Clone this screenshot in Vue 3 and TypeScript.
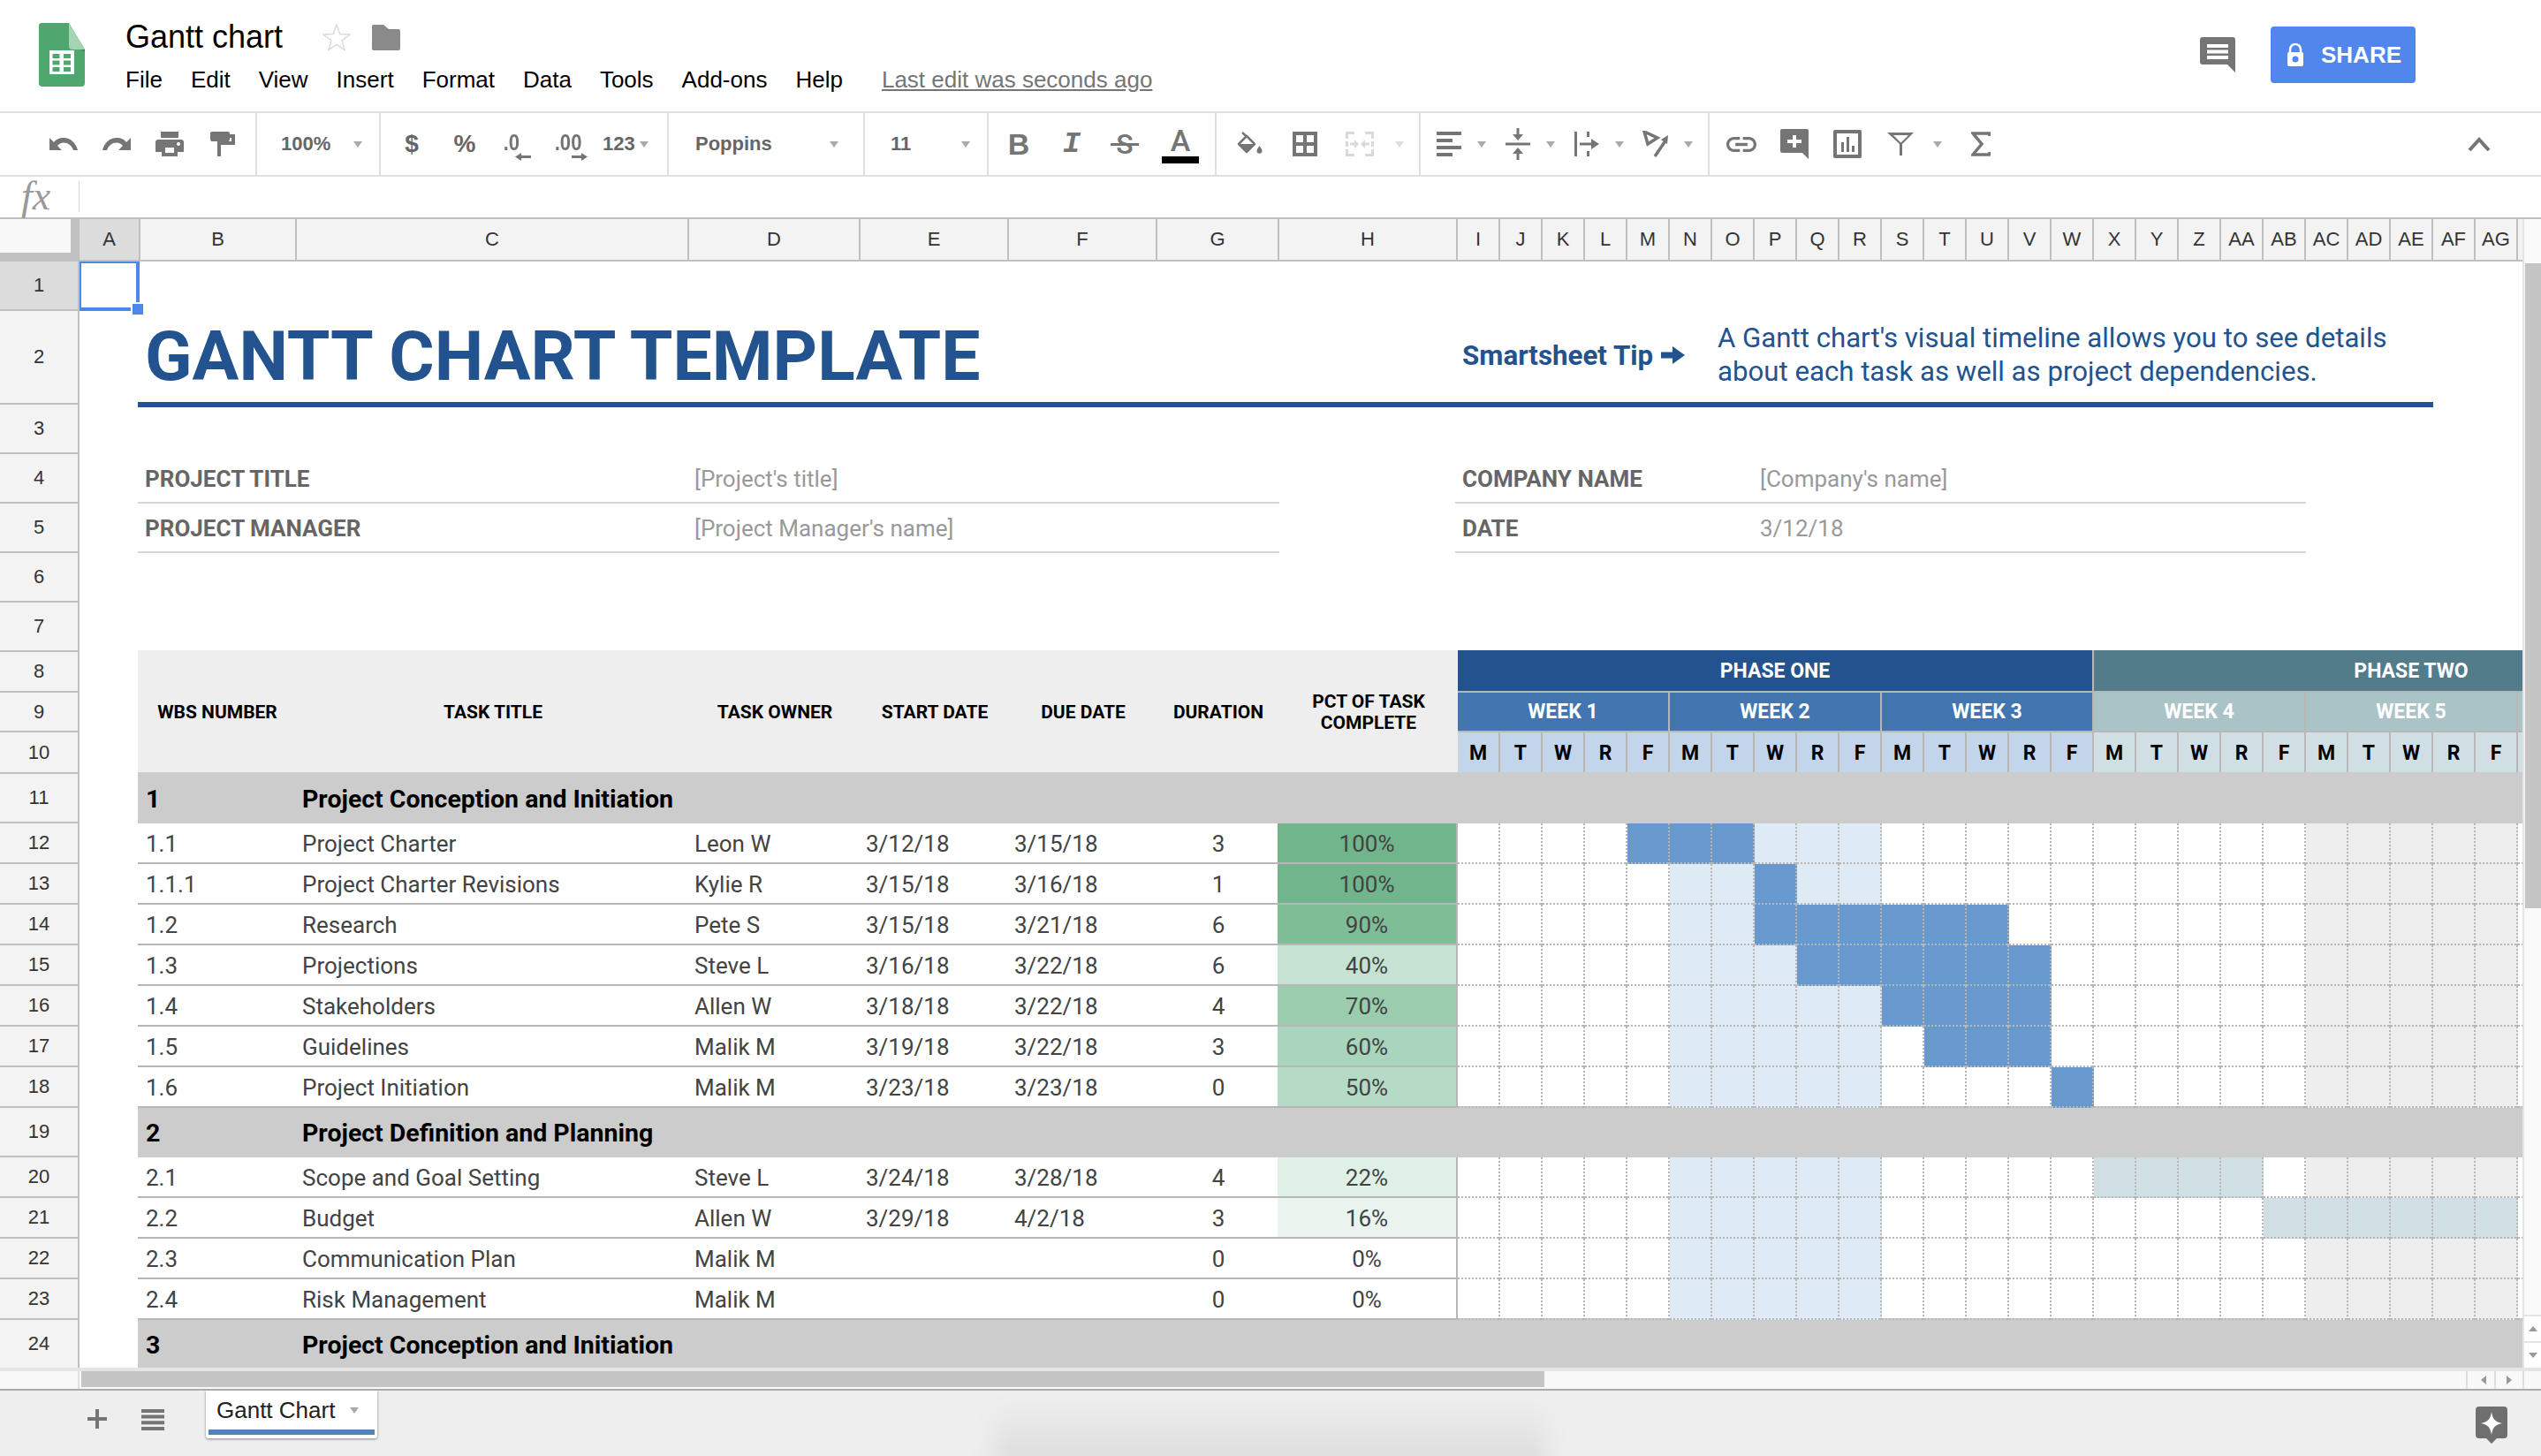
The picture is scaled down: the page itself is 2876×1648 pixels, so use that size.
<script setup lang="ts">
interface Cell { key: string; area: string; text?: string; cls: string; tint?: string }

const colWidths = [69, 177, 444, 194, 168, 168, 138, 202]
const ganttCols = 30
const visibleGantt = 26
const gridCols = [...colWidths, ...Array(ganttCols).fill(48)].map((w) => `${w}px`).join(' ')
const rowHeights = [56, 106, 56, 56, 56, 56, 56, 46, 45, 47, 56, 46, 46, 46, 46, 46, 46, 46, 56, 46, 46, 46, 46, 56]
const gridRows = rowHeights.map((h) => `${h}px`).join(' ')
const rowNums = rowHeights.map((h, i) => ({ n: i + 1, h }))

const letters = ['A','B','C','D','E','F','G','H','I','J','K','L','M','N','O','P','Q','R','S','T','U','V','W','X','Y','Z','AA','AB','AC','AD','AE','AF','AG','']

const cells: Cell[] = []
const put = (r: number, c: number, rs: number, cs: number, cls: string, text = '', tint?: string) => {
  cells.push({ key: `${r}-${c}`, area: `${r} / ${c} / span ${rs} / span ${cs}`, text, cls, tint })
}

// project info
put(4, 2, 1, 2, 'info-label rule', 'PROJECT TITLE')
put(4, 4, 1, 4, 'info-value rule', "[Project's title]")
put(5, 2, 1, 2, 'info-label rule', 'PROJECT MANAGER')
put(5, 4, 1, 4, 'info-value rule', "[Project Manager's name]")
put(4, 9, 1, 7, 'info-label rule', 'COMPANY NAME')
put(4, 16, 1, 13, 'info-value rule', "[Company's name]")
put(5, 9, 1, 7, 'info-label rule', 'DATE')
put(5, 16, 1, 13, 'info-value rule', '3/12/18')

// table head
const heads = ['WBS NUMBER', 'TASK TITLE', 'TASK OWNER', 'START DATE', 'DUE DATE', 'DURATION', 'PCT OF TASK COMPLETE']
heads.forEach((h, i) => put(8, i + 2, 3, 1, i === 0 ? 'th th-first' : 'th', h))
put(8, 9, 1, 15, 'phase p1', 'PHASE ONE')
put(8, 24, 1, 15, 'phase p2', 'PHASE TWO')
;['WEEK 1', 'WEEK 2', 'WEEK 3'].forEach((w, i) => put(9, 9 + i * 5, 1, 5, 'week w1', w))
;['WEEK 4', 'WEEK 5', ''].forEach((w, i) => put(9, 24 + i * 5, 1, 5, 'week w2', w))
for (let i = 0; i < visibleGantt; i++) {
  put(10, 9 + i, 1, 1, i < 15 ? 'day d1' : 'day d2', i < 25 ? 'MTWRF'[i % 5] : '')
}

type Task = [string, string, string, string, string, string, string, string, number, number]
const sections: { row: number; num: string; title: string }[] = [
  { row: 11, num: '1', title: 'Project Conception and Initiation' },
  { row: 19, num: '2', title: 'Project Definition and Planning' },
  { row: 24, num: '3', title: 'Project Conception and Initiation' },
]
const tasks: Record<number, Task> = {
  12: ['1.1', 'Project Charter', 'Leon W', '3/12/18', '3/15/18', '3', '100%', '#71b58c', 4, 6],
  13: ['1.1.1', 'Project Charter Revisions', 'Kylie R', '3/15/18', '3/16/18', '1', '100%', '#71b58c', 7, 7],
  14: ['1.2', 'Research', 'Pete S', '3/15/18', '3/21/18', '6', '90%', '#7fbd97', 7, 12],
  15: ['1.3', 'Projections', 'Steve L', '3/16/18', '3/22/18', '6', '40%', '#c6e2d3', 8, 13],
  16: ['1.4', 'Stakeholders', 'Allen W', '3/18/18', '3/22/18', '4', '70%', '#99cdae', 10, 13],
  17: ['1.5', 'Guidelines', 'Malik M', '3/19/18', '3/22/18', '3', '60%', '#a8d5bc', 11, 13],
  18: ['1.6', 'Project Initiation', 'Malik M', '3/23/18', '3/23/18', '0', '50%', '#b5dbc6', 14, 14],
  20: ['2.1', 'Scope and Goal Setting', 'Steve L', '3/24/18', '3/28/18', '4', '22%', '#dff0e7', 15, 18],
  21: ['2.2', 'Budget', 'Allen W', '3/29/18', '4/2/18', '3', '16%', '#eaf4ef', 19, 24],
  22: ['2.3', 'Communication Plan', 'Malik M', '', '', '0', '0%', '', -1, -1],
  23: ['2.4', 'Risk Management', 'Malik M', '', '', '0', '0%', '', -1, -1],
}
sections.forEach((s) => {
  put(s.row, 2, 1, 1, 'sec sec-num', s.num)
  put(s.row, 3, 1, 36, 'sec sec-title', s.title)
})
Object.entries(tasks).forEach(([k, t]) => {
  const r = Number(k)
  const classes = ['td left', 'td left', 'td left', 'td left', 'td left', 'td mid']
  t.slice(0, 6).forEach((v, i) => put(r, i + 2, 1, 1, i === 0 ? 'td left td-first' : classes[i], v as string))
  put(r, 8, 1, 1, 'td mid pct', t[6], t[7] || undefined)
  const from = t[8]
  const to = t[9]
  for (let i = 0; i < visibleGantt; i++) {
    let cls = 'g'
    if (i >= from && i <= to && from >= 0) cls += i < 15 ? ' bar-blue' : ' bar-teal'
    else if (i >= 5 && i <= 9) cls += ' wk2'
    else if (i >= 20 && i <= 24) cls += ' wk5'
    put(r, 9 + i, 1, 1, cls)
  }
})
</script>

<template>
  <div class="app">
    <header class="titlebar">
      <svg class="logo" viewBox="0 0 52 72" width="52" height="72">
        <path d="M3 0H34L52 30V68a4 4 0 0 1-4 4H4a4 4 0 0 1-4-4V3a3 3 0 0 1 3-3z" fill="#4fa76d" />
        <path d="M34 16L52 30V33L34 21z" fill="#3b8a58" />
        <path d="M34 0L52 30H38a4 4 0 0 1-4-4z" fill="#a5d3b4" />
        <path d="M12 31H40V58H12zM15.500 35V40H23.500V35zM28 35V40H36V35zM15.500 42.500V47.500H23.500V42.500zM28 42.500V47.500H36V42.500zM15.500 50V55H23.500V50zM28 50V55H36V50z" fill="#fff" fill-rule="evenodd" />
      </svg>
      <div class="doc">
        <div class="doc-top">
          <span class="doc-name">Gantt chart</span>
          <svg class="star" viewBox="0 0 32 32" width="32" height="32">
            <path d="M16 2l3.800 10.600 11.200.4-8.900 6.900 3.100 10.800L16 24.500 6.800 30.700l3.100-10.800L1 13l11.200-.4z" fill="none" stroke="#dcdcdc" stroke-width="1.500" />
          </svg>
          <svg class="folder" viewBox="0 0 32 29" width="32" height="29">
            <path d="M2 0H13L19 5H30a2 2 0 0 1 2 2V27a2 2 0 0 1-2 2H2a2 2 0 0 1-2-2V2a2 2 0 0 1 2-2z" fill="#8a8a8a" />
          </svg>
        </div>
        <nav class="menu">
          <span>File</span><span>Edit</span><span>View</span><span>Insert</span><span>Format</span><span>Data</span><span>Tools</span><span>Add-ons</span><span>Help</span>
          <a class="last-edit">Last edit was seconds ago</a>
        </nav>
      </div>
      <div class="top-actions">
        <svg viewBox="0 0 40 40" width="40" height="40">
          <path d="M3 0H37a3 3 0 0 1 3 3V40L31 31H3a3 3 0 0 1-3-3V3a3 3 0 0 1 3-3z" fill="#757575" />
          <path d="M8 8H32V12H8zM8 14.500H32V18.500H8zM8 21H32V25H8z" fill="#fff" />
        </svg>
        <button class="share">
          <svg viewBox="0 0 18 26" width="18" height="26">
            <path d="M3 10V7a6 6 0 0 1 12 0V10" fill="none" stroke="#fff" stroke-width="2.500" />
            <path d="M2 10H16a2 2 0 0 1 2 2V24a2 2 0 0 1-2 2H2a2 2 0 0 1-2-2V12a2 2 0 0 1 2-2zM9 14.500a3.500 3.500 0 1 0 0 7 3.500 3.500 0 0 0 0-7z" fill="#fff" fill-rule="evenodd" />
          </svg>
          <span>SHARE</span>
        </button>
      </div>
    </header>

    <div class="toolbar">
      <div class="grp g1">
        <span class="ic"><svg viewBox="0 0 32 16" width="32" height="16"><path d="M16 1C11 1 7 3 5 6L0 1V15H14L9 10c2-2 4-3.500 7-3.500 5 0 9 3 11 8.500h5C30 7 24 1 16 1z" fill="#757575" /></svg></span>
        <span class="ic"><svg viewBox="0 0 32 16" width="32" height="16"><path d="M16 1C21 1 25 3 27 6L32 1V15H18L23 10c-2-2-4-3.500-7-3.500-5 0-9 3-11 8.500H0C2 7 8 1 16 1z" fill="#757575" /></svg></span>
        <span class="ic"><svg viewBox="0 0 32 28" width="32" height="28"><path d="M6 0H26V7H6zM3 9H29a3 3 0 0 1 3 3V23H25V28H7V23H0V12a3 3 0 0 1 3-3zM11 18V24H21V18zM26 12a2 2 0 1 0 0 4 2 2 0 0 0 0-4z" fill="#757575" fill-rule="evenodd" /></svg></span>
        <span class="ic"><svg viewBox="0 0 28 28" width="28" height="28"><path d="M2 0H20a2 2 0 0 1 2 2V3H28V15H12V28H8V11H24V7H22V9a2 2 0 0 1-2 2H2a2 2 0 0 1-2-2V2a2 2 0 0 1 2-2z" fill="#757575" /></svg></span>
      </div>
      <div class="grp g2">
        <span class="tb-text">100%</span><i class="caret" />
      </div>
      <div class="grp g3">
        <span class="ic glyph">$</span>
        <span class="ic glyph thin">%</span>
        <span class="ic stack dec-less"><b>.0</b><svg viewBox="0 0 18 9" width="18" height="9"><path d="M0 4.500L7 0V3H18V6H7V9z" fill="#757575" /></svg></span>
        <span class="ic stack dec-more"><b>.00</b><svg viewBox="0 0 18 9" width="18" height="9"><path d="M18 4.500L11 0V3H0V6H11V9z" fill="#757575" /></svg></span>
        <span class="tb-text t123">123</span><i class="caret" />
      </div>
      <div class="grp g4">
        <span class="tb-text">Poppins</span><i class="caret" />
      </div>
      <div class="grp g5">
        <span class="tb-text">11</span><i class="caret" />
      </div>
      <div class="grp g6">
        <span class="ic letter bold">B</span>
        <span class="ic letter ital">I</span>
        <span class="ic letter strike"><span>S</span></span>
        <span class="ic text-color"><span>A</span><i /></span>
      </div>
      <div class="grp g7">
        <span class="ic"><svg viewBox="0 0 30 28" width="30" height="28"><path d="M2 14L11 5 20 14 11 23z" fill="none" stroke="#757575" stroke-width="2.500" stroke-linejoin="round" /><path d="M2 14H20L11 23z" fill="#757575" /><path d="M6 1L11 5.500" fill="none" stroke="#757575" stroke-width="2.500" /><path d="M25.500 16c1.800 2.600 3 4 3 5.700a3 3 0 0 1-6 0c0-1.700 1.200-3.100 3-5.700z" fill="#757575" /></svg></span>
        <span class="ic"><svg viewBox="0 0 28 28" width="28" height="28"><path d="M2 2H26V26H2zM14 2V26M2 14H26" fill="none" stroke="#757575" stroke-width="4" /></svg></span>
        <span class="ic"><svg viewBox="0 0 32 28" width="32" height="28"><path d="M1.500 8V1.500H10M22 1.500H30.500V8M30.500 20V26.500H22M10 26.500H1.500V20M1.500 11V17M30.500 11V17" fill="none" stroke="#d9d9d9" stroke-width="3" /><path d="M5 12.500H10V9L15 14 10 19V15.500H5zM27 12.500H22V9L17 14 22 19V15.500H27z" fill="#d9d9d9" /></svg></span>
        <i class="caret light" />
      </div>
      <div class="grp g8">
        <span class="ic2"><svg viewBox="0 0 28 28" width="28" height="28"><path d="M0 0H28V4H0zM0 8H18V12H0zM0 16H28V20H0zM0 24H18V28H0z" fill="#757575" /></svg></span><i class="caret" />
        <span class="ic2"><svg viewBox="0 0 28 36" width="28" height="36"><path d="M0 16.500H28V19.500H0z" fill="#757575" /><path d="M12.500 0H15.500V7H20L14 14 8 7H12.500zM12.500 36H15.500V29H20L14 22 8 29H12.500z" fill="#757575" /></svg></span><i class="caret" />
        <span class="ic2"><svg viewBox="0 0 28 28" width="28" height="28"><path d="M0 0H3V28H0zM14 0H17V6H14zM14 22H17V28H14zM6 12.500H19V8L28 14 19 20V15.500H6z" fill="#757575" /></svg></span><i class="caret" />
        <span class="ic2"><svg viewBox="0 0 30 30" width="30" height="30"><path d="M2 1L17 8 6 15zM14 29L27 10" fill="none" stroke="#757575" stroke-width="3.500" /><path d="M29 5L28 15 21 10z" fill="#757575" /></svg></span><i class="caret" />
      </div>
      <div class="grp g9">
        <span class="ic"><svg viewBox="2 7 20 10" width="34" height="17"><path d="M3.900 12c0-1.710 1.390-3.100 3.100-3.100h4V7H7c-2.760 0-5 2.240-5 5s2.240 5 5 5h4v-1.900H7c-1.710 0-3.100-1.390-3.100-3.100zM8 13h8v-2H8v2zm9-6h-4v1.900h4c1.710 0 3.100 1.390 3.100 3.100s-1.390 3.100-3.100 3.100h-4V17h4c2.760 0 5-2.240 5-5s-2.240-5-5-5z" fill="#757575" /></svg></span>
        <span class="ic"><svg viewBox="0 0 32 34" width="32" height="34"><path d="M2 0H30a2 2 0 0 1 2 2V34L25 27H2a2 2 0 0 1-2-2V2a2 2 0 0 1 2-2z" fill="#757575" /><path d="M14 7H18V12H24V16H18V21H14V16H8V12H14z" fill="#fff" /></svg></span>
        <span class="ic"><svg viewBox="0 0 32 32" width="32" height="32"><path d="M2 0H30a2 2 0 0 1 2 2V30a2 2 0 0 1-2 2H2a2 2 0 0 1-2-2V2a2 2 0 0 1 2-2zM4 4V28H28V4z" fill="#757575" fill-rule="evenodd" /><path d="M9 14H12V25H9zM15 8H18V25H15zM21 18H24V25H21z" fill="#757575" /></svg></span>
        <span class="ic"><svg viewBox="0 0 30 26" width="30" height="26"><path d="M0 0H30L17 13V26H14V13zM7 3L15.500 11.500 24 3z" fill="#757575" fill-rule="evenodd" /></svg></span>
        <i class="caret cbox" />
        <span class="ic sigma"><svg viewBox="0 0 22 28" width="22" height="28"><path d="M21 5V2H2L12 14 2 26H21V23" fill="none" stroke="#757575" stroke-width="3.500" /></svg></span>
      </div>
      <svg class="collapse" viewBox="0 0 26 16" width="26" height="16"><path d="M2 15L13 3 24 15" fill="none" stroke="#757575" stroke-width="4" /></svg>
    </div>

    <div class="formula">
      <span class="fx">fx</span>
      <span class="fx-sep" />
    </div>

    <div class="sheet">
      <div class="sheet-main">
        <div class="head-row">
          <div class="corner"><span /></div>
          <div class="col-heads">
            <div v-for="(l, i) in letters" :key="i" class="ch" :class="{ active: i === 0 }" :style="{ width: (i < 8 ? colWidths[i] : 48) + 'px' }">{{ l }}</div>
          </div>
        </div>
        <div class="body">
          <div class="row-heads">
            <div v-for="r in rowNums" :key="r.n" class="rh" :class="{ active: r.n === 1 }" :style="{ height: r.h + 'px' }">{{ r.n }}</div>
          </div>
          <div class="grid" :style="{ gridTemplateColumns: gridCols, gridTemplateRows: gridRows }">
            <div class="sel"><i /></div>
            <div class="title-row">
              <h1>GANTT CHART TEMPLATE</h1>
            </div>
            <div class="tip">
              <span class="tip-head">Smartsheet Tip <svg viewBox="0 0 28 24" width="28" height="24"><path d="M0 8.500H13V2L27 12 13 22V15.500H0z" fill="#22538f" /></svg></span>
              <span class="tip-body">A Gantt chart's visual timeline allows you to see details<br />about each task as well as project dependencies.</span>
            </div>
            <div class="title-rule" />
            <div
              v-for="c in cells"
              :key="c.key"
              :class="c.cls"
              :style="{ gridArea: c.area, backgroundColor: c.tint }"
            ><span v-if="c.text">{{ c.text }}</span></div>
          </div>
        </div>
      </div>
      <aside class="vscroll">
        <div class="vthumb" />
        <div class="varrows">
          <button class="arrow"><i class="tri up" /></button>
          <button class="arrow"><i class="tri down" /></button>
        </div>
      </aside>
    </div>

    <div class="hscroll">
      <div class="hspacer" />
      <div class="htrack"><div class="hthumb" /></div>
      <button class="harrow"><i class="tri left" /></button>
      <button class="harrow"><i class="tri right" /></button>
      <div class="hend" />
    </div>

    <footer class="tabs">
      <svg class="plus" viewBox="0 0 22 22" width="22" height="22"><path d="M9 0H13V9H22V13H13V22H9V13H0V9H9z" fill="#757575" /></svg>
      <svg class="all" viewBox="0 0 26 24" width="26" height="24"><path d="M0 0H26V4H0zM0 6.600H26V10.600H0zM0 13.300H26V17.300H0zM0 20H26V24H0z" fill="#757575" /></svg>
      <div class="tab">
        <div class="tab-in"><span>Gantt Chart</span><i class="caret" /></div>
        <div class="tab-line" />
      </div>
      <div class="explore">
        <svg viewBox="0 0 36 42" width="36" height="42">
          <path d="M4 0H32a4 4 0 0 1 4 4V32a4 4 0 0 1-4 4H24L18 42 12 36H4a4 4 0 0 1-4-4V4a4 4 0 0 1 4-4z" fill="#6f6f6f" />
          <path d="M18 6C19.500 14 21 17 30 19 21 21 19.500 24 18 32 16.500 24 15 21 6 19 15 17 16.500 14 18 6z" fill="#fff" />
        </svg>
      </div>
      <div class="shadow" />
    </footer>
  </div>
</template>

<style>
html, body { margin: 0; padding: 0; background: #fff; }
</style>

<style scoped>
.app { width: 2876px; height: 1648px; display: flex; flex-direction: column; overflow: hidden; background: #fff; font-family: "Liberation Sans", Arial, sans-serif; color: #000; }

.titlebar { height: 126px; flex: none; box-sizing: border-box; display: flex; align-items: flex-start; position: relative; }
.logo { margin: 26px 0 0 44px; flex: none; }
.doc { margin-left: 46px; }
.doc-top { display: flex; align-items: center; height: 36px; margin-top: 24px; }
.doc-name { font-size: 36px; width: 223px; }
.folder { margin-left: 24px; }
.menu { display: flex; align-items: center; gap: 32px; font-size: 26px; margin-top: 15px; height: 30px; }
.last-edit { margin-left: 12px; color: #757575; text-decoration: underline; }
.top-actions { margin-left: auto; display: flex; align-items: flex-start; padding-right: 142px; padding-top: 30px; gap: 40px; }
.top-actions > svg { margin-top: 12px; }
.share { width: 164px; height: 64px; border: 0; border-radius: 4px; background: #5186ec; color: #fff; font: bold 26px "Liberation Sans", Arial, sans-serif; display: flex; align-items: center; padding: 0 0 0 19px; gap: 20px; }

.toolbar { height: 74px; flex: none; box-sizing: border-box; border-top: 2px solid #e0e0e0; border-bottom: 2px solid #e0e0e0; display: flex; align-items: stretch; position: relative; color: #666; }
.grp { display: flex; align-items: center; box-sizing: border-box; border-right: 2px solid #e0e0e0; flex: none; }
.g1 { width: 291px; padding-left: 42px; }
.g2 { width: 140px; padding-left: 27px; gap: 26px; }
.g3 { width: 326px; padding-left: 5px; }
.g4 { width: 222px; padding: 0 28px 0 30px; justify-content: space-between; }
.g5 { width: 140px; padding: 0 19px 0 29px; justify-content: space-between; }
.g6 { width: 258px; padding-left: 4px; }
.g7 { width: 231px; padding-left: 7px; }
.g7 .ic { width: 62px; }
.g7 .caret { margin-left: 9px; }
.g8 { width: 327px; padding-left: 5px; }
.g9 { border-right: 0; padding-left: 6px; }
.ic { width: 60px; height: 100%; display: flex; align-items: center; justify-content: center; flex: none; }
.ic2 { width: 53px; display: flex; align-items: center; justify-content: center; flex: none; }
.g8 .caret { margin: 0 9.500px 0 5.500px; }
.cbox { margin: 0 7px 0 7px; }
.sigma { margin-left: 7px; }
.caret { width: 0; height: 0; flex: none; border-left: 5px solid transparent; border-right: 5px solid transparent; border-top: 7px solid #aaa; }
.caret.light { border-top-color: #ddd; }
.tb-text { font-size: 22px; font-weight: bold; color: #666; }
.t123 { margin: 0 5px 0 9px; }
.glyph { font-size: 28px; font-weight: bold; color: #666; font-family: "Liberation Sans", sans-serif; }
.stack { flex-direction: column; font-size: 26px; line-height: 26px; justify-content: center; color: #757575; padding-top: 4px; box-sizing: border-box; }
.stack b { font-weight: bold; transform: scaleX(.85); }
.stack svg { margin-left: 26px; margin-top: -1px; }
.dec-less { margin-left: -7px; }
.dec-more { margin-left: 4px; }
.letter { font-size: 34px; color: #757575; }
.letter.bold { font-family: "Liberation Sans", sans-serif; font-weight: bold; }
.letter.ital { font-family: "Liberation Mono", monospace; font-style: italic; font-weight: bold; }
.letter.strike { font-family: Roboto, sans-serif; font-weight: 500; font-size: 32px; }
.letter.strike span { position: relative; }
.letter.strike span::after { content: ""; position: absolute; left: -6px; right: -6px; top: 50%; height: 3px; margin-top: -1px; background: #757575; }
.text-color { flex-direction: column; margin-left: 3px; }
.text-color span { font: 500 34px/30px Roboto, sans-serif; color: #757575; margin-top: 2px; }
.text-color i { display: block; width: 42px; height: 8px; background: #000; margin-top: 3px; }
.collapse { position: absolute; left: 2793px; top: 27px; }

.formula { height: 46px; flex: none; display: flex; align-items: center; position: relative; }
.fx { width: 89px; box-sizing: border-box; padding-left: 24px; margin-top: -3px; font: italic 46px "Liberation Serif", serif; color: #9a9a9a; line-height: 40px; }
.fx-sep { width: 1px; height: 34px; background: #d5d5d5; }

.sheet { height: 1302px; flex: none; display: flex; border-top: 2px solid #c0c0c0; box-sizing: border-box; overflow: hidden; }
.sheet-main { width: 2855px; flex: none; display: flex; flex-direction: column; overflow: hidden; }
.head-row { display: flex; height: 48px; flex: none; border-bottom: 2px solid #c0c0c0; box-sizing: border-box; }
.corner { width: 90px; flex: none; box-sizing: border-box; background: #c0c0c0; padding: 0 10px 8px 0; }
.corner span { display: block; height: 100%; background: #f8f8f8; }
.col-heads { display: flex; background: #f3f3f3; }
.ch { flex: none; box-sizing: border-box; border-right: 2px solid #c0c0c0; text-align: center; font-size: 22px; line-height: 46px; color: #333; }
.ch.active { background: #dcdcdc; }

.body { display: flex; flex: none; }
.row-heads { width: 90px; flex: none; box-sizing: border-box; background: #f3f3f3; border-right: 2px solid #c0c0c0; }
.rh { box-sizing: border-box; border-bottom: 2px solid #c0c0c0; display: flex; align-items: center; justify-content: center; font-size: 22px; color: #333; }
.rh.active { background: #dcdcdc; }

.grid { display: grid; position: relative; flex: none; }
.sel { grid-area: 1 / 1 / span 1 / span 1; margin-right: 1px; border: solid #4f86ec; border-width: 2px 4px 4px 2px; box-sizing: border-box; position: relative; z-index: 2; }
.sel i { position: absolute; right: -8px; bottom: -8px; width: 12px; height: 12px; background: #4f86ec; box-shadow: 0 0 0 2px #fff; }
.title-row { grid-area: 2 / 2 / span 1 / span 7; display: flex; align-items: flex-end; padding-left: 5px; box-sizing: border-box; }
.title-row h1 { margin: 0 0 11px; font: bold 78.600px/88px Roboto, sans-serif; color: #22538f; white-space: nowrap; }
.tip { grid-area: 2 / 9 / span 1 / span 23; display: flex; align-items: center; padding: 0 0 6px 5px; }
.tip-head { font: bold 31.300px Roboto, sans-serif; color: #22538f; width: 289px; flex: none; display: flex; align-items: center; gap: 9px; white-space: nowrap; }
.tip-body { font: 31.200px/38px Roboto, sans-serif; color: #22538f; white-space: nowrap; }
.title-rule { grid-area: 2 / 2 / span 1 / span 30; align-self: end; height: 6px; margin: 0 0 -3px -3px; background: #22538f; }

.rule { border-bottom: 2px solid #d6d6d6; box-sizing: border-box; display: flex; align-items: center; white-space: nowrap; padding-top: 1px; }
.info-label { font: bold 26px Roboto, sans-serif; color: #666; margin-left: -3px; padding-left: 8px; }
.info-value { font: 26px Roboto, sans-serif; color: #999; padding-left: 6px; }

.th { background: #eee; display: flex; align-items: center; justify-content: center; text-align: center; font: bold 21px/24px Roboto, sans-serif; padding: 0 18px; box-sizing: border-box; margin-top: -2px; }
.th-first { margin-left: -3px; }
.phase, .week, .day { display: flex; align-items: center; justify-content: center; box-sizing: border-box; font-family: Roboto, sans-serif; font-weight: bold; white-space: nowrap; }
.phase { font-size: 23px; color: #fff; border-bottom: 2px solid #b7b7b7; border-right: 2px solid #b7b7b7; margin-top: -2px; }
.p1 { background: #22538f; }
.p2 { background: #527c8a; }
.week { font-size: 23px; color: #fff; border-bottom: 2px solid #b7b7b7; border-right: 2px solid #b7b7b7; }
.w1 { background: #4375b0; }
.w2 { background: #a9c3c7; }
.day { font-size: 23px; color: #000; border-right: 2px solid #b7b7b7; }
.d1 { background: #c2d5ea; }
.d2 { background: #d0dfe3; }

.sec { background: #ccc; display: flex; align-items: center; font: bold 28.500px Roboto, sans-serif; color: #000; box-sizing: border-box; margin-top: -2px; padding-top: 2px; white-space: nowrap; }
.sec-num { margin-left: -3px; padding-left: 9px; }
.sec-title { padding-left: 6px; }

.td { box-sizing: border-box; border-bottom: 2px solid #b7b7b7; display: flex; align-items: center; font: 26px Roboto, sans-serif; color: #434343; white-space: nowrap; padding-top: 2px; }
.td-first { margin-left: -3px; padding-left: 9px; }
.left { padding-left: 6px; }
.td-first.left { padding-left: 9px; }
.mid { justify-content: center; }
.pct { border-right: 2px solid #b7b7b7; margin-left: -2px; }
.g {
  box-sizing: border-box;
  background-image: repeating-linear-gradient(to right, #b7b7b7 0 2px, transparent 2px 4px), repeating-linear-gradient(to bottom, #b7b7b7 0 2px, transparent 2px 4px);
  background-size: 100% 2px, 2px 100%;
  background-position: left bottom, right top;
  background-repeat: no-repeat;
}
.bar-blue { background-color: #6798ce; }
.bar-teal { background-color: #d0dfe3; }
.wk2 { background-color: #deeaf6; }
.wk5 { background-color: #ededed; }

.vscroll { width: 21px; flex: none; position: relative; border-left: 2px solid #e4e4e4; box-sizing: border-box; display: flex; flex-direction: column; background: #fafafa; }
.vthumb { margin-top: 50px; height: 730px; background: #c4c4c4; margin-left: 1px; }
.varrows { margin-top: auto; }
.arrow { display: flex; align-items: center; justify-content: center; width: 100%; height: 30px; padding: 0; border: 0; border-top: 2px solid #e4e4e4; background: #fff; }
.tri { width: 0; height: 0; display: block; }
.tri.up { border-left: 5px solid transparent; border-right: 5px solid transparent; border-bottom: 6px solid #999; }
.tri.down { border-left: 5px solid transparent; border-right: 5px solid transparent; border-top: 6px solid #999; }
.tri.left { border-top: 5px solid transparent; border-bottom: 5px solid transparent; border-right: 6px solid #999; }
.tri.right { border-top: 5px solid transparent; border-bottom: 5px solid transparent; border-left: 6px solid #999; }

.hscroll { height: 26px; flex: none; display: flex; background: #f8f8f8; border-top: 4px solid #e4e4e4; border-bottom: 2px solid #aaa; box-sizing: border-box; }
.hspacer { width: 90px; border-right: 2px solid #e0e0e0; box-sizing: border-box; flex: none; }
.htrack { width: 2701px; flex: none; padding: 0 0 0 2px; box-sizing: border-box; }
.hthumb { width: 1656px; height: 18px; background: #c4c4c4; }
.harrow { width: 32px; flex: none; display: flex; align-items: center; justify-content: center; padding: 0; background: #f8f8f8; border: 0; border-left: 2px solid #e0e0e0; }
.hend { width: 21px; border-left: 2px solid #e0e0e0; box-sizing: border-box; }

.tabs { flex: 1; background: #eee; position: relative; display: flex; align-items: flex-start; overflow: hidden; }
.plus { margin: 21px 0 0 99px; flex: none; }
.all { margin: 21px 0 0 39px; flex: none; }
.tab { margin-left: 47px; width: 194px; height: 54px; box-sizing: border-box; background: #fff; box-shadow: 0 1px 3px rgba(0,0,0,.45); border-radius: 0 0 3px 3px; padding: 0 3px; flex: none; position: relative; }
.tab-in { display: flex; align-items: center; height: 44px; padding-left: 9px; gap: 17px; font-size: 26px; color: #222; box-sizing: border-box; }
.tab-line { height: 6px; background: #4d82c0; }
.explore { position: absolute; left: 2802px; top: 18px; line-height: 0; }
.shadow { position: absolute; left: 1125px; top: 12px; bottom: -24px; width: 625px; background: linear-gradient(to bottom, rgba(0,0,0,0), rgba(0,0,0,.09)); filter: blur(14px); }
</style>
